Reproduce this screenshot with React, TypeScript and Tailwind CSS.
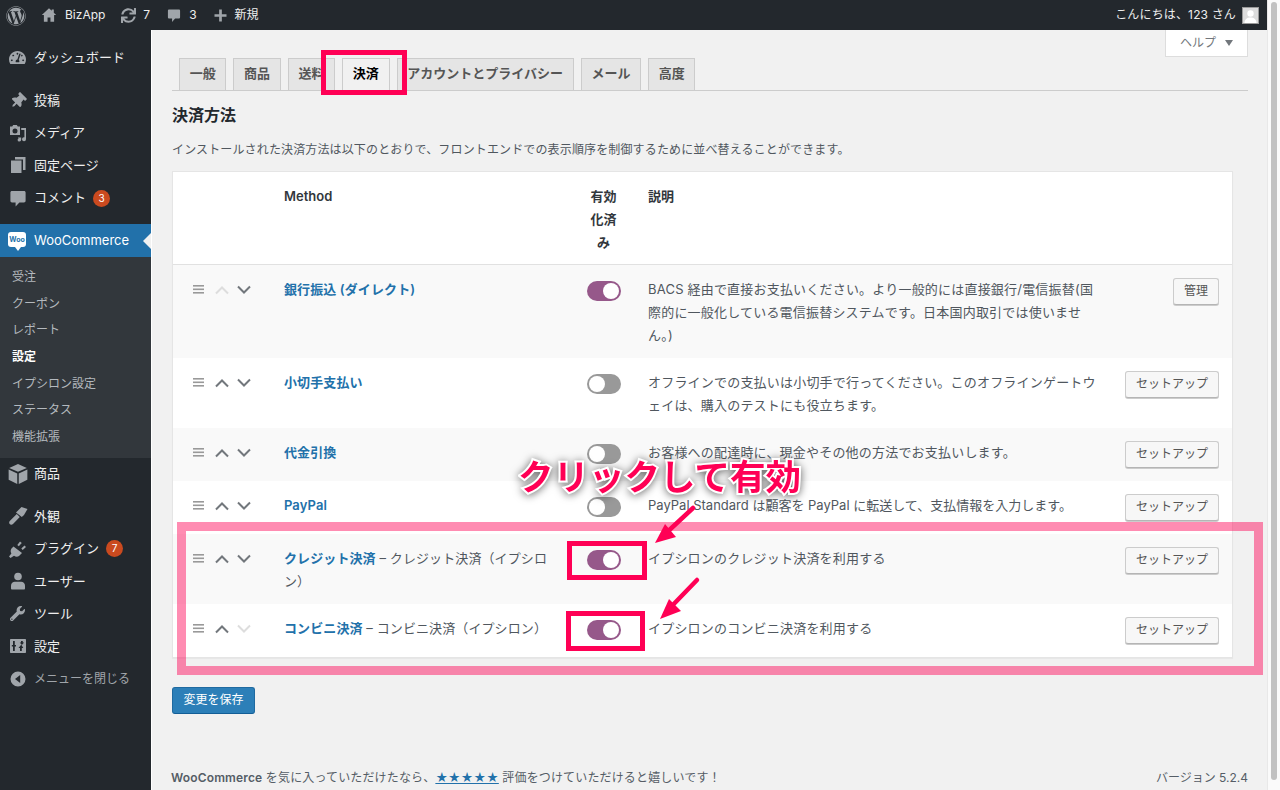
import React from 'react';
import { FaWordpress, FaSync, FaTachometerAlt, FaThumbtack, FaWrench } from 'react-icons/fa';

const font = { fontFamily: 'Inter, "Noto Sans CJK JP", sans-serif' };

const Svg: React.FC<{ size?: number; children: React.ReactNode; className?: string }> = ({ size = 20, children, className }) => (
  <svg width={size} height={size} viewBox="0 0 20 20" fill="currentColor" className={className}>
    {children}
  </svg>
);

const HomeIcon = () => (
  <Svg size={16}>
    <path d="M10 1.500 1 10h2.600v8.500h4.600v-5.500h3.600v5.500h4.600V10H19l-3-2.900V3h-2.600v1.600z" />
  </Svg>
);
const BubbleIcon = ({ size = 20 }: { size?: number }) => (
  <Svg size={size}>
    <path d="M4 3h12c1 0 1.600.7 1.600 1.600v8.200c0 1-.7 1.600-1.600 1.600h-4.600L7.600 18.600v-4.200H4c-1 0-1.600-.7-1.600-1.600V4.600c0-.9.600-1.600 1.600-1.600z" />
  </Svg>
);
const MediaIcon = () => (
  <Svg>
    <path fillRule="evenodd" d="M2 3.500h2.200l1-1.500h3.600l1 1.500H12v8.500H2zM7 5.500a2.500 2.500 0 1 0 0 5 2.500 2.500 0 0 0 0-5z" />
    <path d="M13.200 5H18v11.200a2 2 0 1 1-1.600-2V7h-3.200zM10 14.500h3.200v2.300a1.800 1.800 0 1 1-1.600-1.800h-1.600z" />
  </Svg>
);
const PagesIcon = () => (
  <Svg>
    <path d="M7 2h10.500v13H15V4.500H7z" />
    <path d="M3 5.500h10.500V18H3z" />
  </Svg>
);
const BoxIcon = () => (
  <Svg size={22}>
    <path d="M10 1 18 4.500 10 8 2 4.500z" />
    <path d="M1.500 6 9.300 9.500V19L1.500 15.200z" />
    <path d="M18.500 6 10.700 9.500V19l7.800-3.800z" />
  </Svg>
);
const BrushIcon = () => (
  <Svg>
    <path d="M10 4.500 13.500 1l6 2-3.500 6-2.200 2-5.800-4.500z" />
    <path d="M8.800 8 11.800 11 5 18c-1 1-2.500 1-3.300 0s-.7-2.200.300-3.200z" />
  </Svg>
);
const PlugIcon = () => (
  <Svg>
    <path d="M12 2.500 13.800 4 10.800 7.300l-1.500-1.300zM16.500 6.500 18 8 14.700 11l-1.400-1.500z" />
    <path d="M5.500 7.500 14 14l-3 3c-1.500 1-3.500.8-5-.3L2.500 19 1 17.500l2.400-3c-1-1.500-1-3.500.1-5z" />
  </Svg>
);
const UserIcon = () => (
  <Svg>
    <circle cx="10" cy="5.500" r="3.800" />
    <path d="M3 17.500v-3c0-2.200 2-3.800 3.800-3.800h6.400c1.800 0 3.800 1.600 3.800 3.800v3c0 .5-.5 1-1 1H4c-.5 0-1-.5-1-1z" />
  </Svg>
);
const SlidersIcon = () => (
  <Svg>
    <path fillRule="evenodd" d="M3 3h14c.6 0 1 .4 1 1v12c0 .6-.4 1-1 1H3c-.6 0-1-.4-1-1V4c0-.6.4-1 1-1zM5 5v4H3.800v1.600H5V15h1.800v-4.400H8V9H6.800V5zM13 5v1.500h-1.300l2.200 2.500 2.200-2.500h-1.300V5zM13 9l-2.500 3h1.500v3h1.800v-3h1.500L13.500 9zM9 9.500" />
  </Svg>
);
const CollapseIcon = () => (
  <Svg>
    <path fillRule="evenodd" d="M10 2.500a7.500 7.500 0 1 1 0 15 7.500 7.500 0 0 1 0-15zM12.200 6 7 10l5.200 4z" />
  </Svg>
);

const mainMenu: { label: string; icon: React.ReactNode; cls: string; badge?: string }[] = [
  { label: 'ダッシュボード', icon: <FaTachometerAlt size={17} />, cls: 'h-[33px]' },
  { label: '投稿', icon: <FaThumbtack size={16} className="rotate-45" />, cls: 'h-[32px] mt-[10.5px]' },
  { label: 'メディア', icon: <MediaIcon />, cls: 'h-[32.5px]' },
  { label: '固定ページ', icon: <PagesIcon />, cls: 'h-[32.5px]' },
  { label: 'コメント', icon: <BubbleIcon />, cls: 'h-[33px]', badge: '3' },
];

const lowerMenu: { label: string; icon: React.ReactNode; cls: string; badge?: string }[] = [
  { label: '商品', icon: <BoxIcon />, cls: 'h-[32px]' },
  { label: '外観', icon: <BrushIcon />, cls: 'h-[32.5px] mt-[10px]' },
  { label: 'プラグイン', icon: <PlugIcon />, cls: 'h-[32.5px]', badge: '7' },
  { label: 'ユーザー', icon: <UserIcon />, cls: 'h-[32.5px]' },
  { label: 'ツール', icon: <FaWrench size={15} />, cls: 'h-[32.5px]' },
  { label: '設定', icon: <SlidersIcon />, cls: 'h-[32.5px]' },
];

const subMenu = ['受注', 'クーポン', 'レポート', '設定', 'イプシロン設定', 'ステータス', '機能拡張'];

const MenuItem: React.FC<{ label: string; icon: React.ReactNode; cls: string; badge?: string }> = ({ label, icon, cls, badge }) => (
  <div className={`flex items-center ${cls}`}>
    <span className="w-[34px] flex justify-center pl-px text-[#a0a5aa]">{icon}</span>
    <span className="text-[13px] text-[#eeeeee]">{label}</span>
    {badge && (
      <span className="ml-[7px] w-[17px] h-[17px] rounded-full bg-[#ca4a1f] text-white text-[10px] flex items-center justify-center">
        {badge}
      </span>
    )}
  </div>
);

const Sidebar = () => (
  <div className="w-[151px] shrink-0 bg-[#23282d] pt-[11px]">
    {mainMenu.map((m) => (
      <MenuItem key={m.label} {...m} />
    ))}
    <div className="relative mt-[9.5px] h-[33px] bg-[#2271aa] flex items-center">
      <span className="w-[34px] flex justify-center">
        <span className="relative w-[18px] h-[15px] -mt-[2px] bg-white rounded-[3px] flex items-center justify-center text-[7px] font-bold text-[#2271aa] leading-none">
          Woo
          <span className="absolute left-[7px] top-[15px] w-0 h-0 border-x-[3px] border-x-transparent border-t-[4px] border-t-white" />
        </span>
      </span>
      <span className="text-[13px] text-white">WooCommerce</span>
      <span className="absolute right-0 top-[9px] w-0 h-0 border-y-[8px] border-y-transparent border-r-[8px] border-r-[#f1f1f1]" />
    </div>
    <div className="bg-[#32373c] pt-[6.500px] h-[201px]">
      {subMenu.map((s) => (
        <div
          key={s}
          className={`h-[26.7px] pl-[12px] flex items-center text-[12px] ${s === '設定' ? 'font-bold text-white' : 'text-[#b4b9be]'}`}
        >
          {s}
        </div>
      ))}
    </div>
    {lowerMenu.map((m) => (
      <MenuItem key={m.label} {...m} />
    ))}
    <div className="flex items-center h-[32.5px]">
      <span className="w-[34px] flex justify-center pl-px text-[#a0a5aa]">
        <CollapseIcon />
      </span>
      <span className="text-[12px] text-[#a0a5aa]">メニューを閉じる</span>
    </div>
  </div>
);

const TopBar = () => (
  <div className="h-[30px] shrink-0 bg-[#23282d] flex items-center text-[12px] text-[#eeeeee]">
    <span className="w-[33px] pl-[6px] text-[#a0a5aa] mt-[1px]">
      <FaWordpress size={20} />
    </span>
    <span className="ml-[8px] text-[#a0a5aa]">
      <HomeIcon />
    </span>
    <span className="ml-[8px]">BizApp</span>
    <span className="ml-[16px] text-[#a0a5aa]">
      <FaSync size={15} />
    </span>
    <span className="ml-[7px]">7</span>
    <span className="ml-[16px] text-[#a0a5aa]">
      <BubbleIcon size={16} />
    </span>
    <span className="ml-[7px]">3</span>
    <span className="ml-[16px] text-[#a0a5aa]">
      <Svg size={15}>
        <path d="M8.200 2h3.600v6.200H18v3.600h-6.200V18H8.200v-6.200H2V8.200h6.200z" />
      </Svg>
    </span>
    <span className="ml-[7px]">新規</span>
    <div className="ml-auto flex items-center pr-[8px]">
      <span className="tracking-[0.15px]">こんにちは、123 さん</span>
      <span className="ml-[6px] w-[17px] h-[17px] bg-[#dcdcdc] border border-[#999] overflow-hidden flex items-end justify-center">
        <svg width="15" height="15" viewBox="0 0 15 15" fill="#fff">
          <circle cx="7.500" cy="5.500" r="3.200" />
          <path d="M1.500 15c0-3.500 2.500-5.500 6-5.500s6 2 6 5.500z" />
        </svg>
      </span>
    </div>
  </div>
);

const tabs = ['一般', '商品', '送料', '決済', 'アカウントとプライバシー', 'メール', '高度'];

const Chevron: React.FC<{ up?: boolean; off?: boolean }> = ({ up, off }) => (
  <svg width="16" height="10" viewBox="0 0 16 10" fill="none" stroke={off ? '#dddddd' : '#72777c'} strokeWidth="2">
    <path d={up ? 'M2 8.500 8 2.500l6 6' : 'M2 1.500l6 6 6-6'} />
  </svg>
);

const Toggle: React.FC<{ on?: boolean }> = ({ on }) => (
  <span
    className={`mx-auto w-[34px] h-[20px] rounded-full p-[2px] flex ${on ? 'bg-[#96588a] justify-end' : 'bg-[#999999] justify-start'}`}
  >
    <span className="block w-[16px] h-[16px] rounded-full bg-white" />
  </span>
);

type Row = {
  cls: string;
  name: string;
  sub?: string;
  on?: boolean;
  desc: string;
  descCls?: string;
  action: string;
  upOff?: boolean;
  downOff?: boolean;
};

const rows: Row[] = [
  {
    cls: 'h-[93px] bg-[#f9f9f9]',
    name: '銀行振込 (ダイレクト)',
    on: true,
    desc: 'BACS 経由で直接お支払いください。より一般的には直接銀行/電信振替(国際的に一般化している電信振替システムです。日本国内取引では使いません。)',
    action: '管理',
    upOff: true,
  },
  {
    cls: 'h-[70px] bg-white',
    name: '小切手支払い',
    desc: 'オフラインでの支払いは小切手で行ってください。このオフラインゲートウェイは、購入のテストにも役立ちます。',
    action: 'セットアップ',
  },
  {
    cls: 'h-[53px] bg-[#f9f9f9]',
    name: '代金引換',
    desc: 'お客様への配達時に、現金やその他の方法でお支払いします。',
    action: 'セットアップ',
  },
  {
    cls: 'h-[53px] bg-white',
    name: 'PayPal',
    desc: 'PayPal Standard は顧客を PayPal に転送して、支払情報を入力します。',
    descCls: 'tracking-normal',
    action: 'セットアップ',
  },
  {
    cls: 'h-[70px] bg-[#f9f9f9]',
    name: 'クレジット決済',
    sub: ' – クレジット決済（イプシロン）',
    on: true,
    desc: 'イプシロンのクレジット決済を利用する',
    action: 'セットアップ',
  },
  {
    cls: 'h-[53px] bg-white',
    name: 'コンビニ決済',
    sub: ' – コンビニ決済（イプシロン）',
    on: true,
    desc: 'イプシロンのコンビニ決済を利用する',
    action: 'セットアップ',
    downOff: true,
  },
];

const gridCols = 'grid grid-cols-[111px_275px_89px_452px_1fr]';

const PaymentRow: React.FC<{ row: Row }> = ({ row }) => (
  <div className={`${gridCols} ${row.cls} text-[13px] leading-[23px] text-[#50575e]`}>
    <div className="flex items-center h-[23px] mt-[13px] pl-[20px]">
      <svg width="11" height="9" viewBox="0 0 11 9" fill="#999999">
        <rect width="11" height="1.600" />
        <rect y="3.500" width="11" height="1.600" />
        <rect y="7" width="11" height="1.600" />
      </svg>
      <span className="ml-[10px]">
        <Chevron up off={row.upOff} />
      </span>
      <span className="ml-[6px]">
        <Chevron off={row.downOff} />
      </span>
    </div>
    <div className="pt-[13px] tracking-[0.1px]">
      <span className="font-semibold text-[#2271aa]">{row.name}</span>
      {row.sub}
    </div>
    <div className="pt-[15.500px]">
      <Toggle on={row.on} />
    </div>
    <div className={`pt-[13px] ${row.descCls ?? 'tracking-[0.2px]'}`}>{row.desc}</div>
    <div className="pt-[12.5px] pr-[13px] flex justify-end items-start">
      <button className="h-[27px] px-[10px] rounded-[3px] border border-[#cccccc] border-b-[#b5b5b5] bg-[#f7f7f7] text-[12px] leading-none text-[#555555] shadow-[0_1px_0_#cccccc]">
        {row.action}
      </button>
    </div>
  </div>
);

const Annotations = () => (
  <>
    <div className="absolute left-[321px] top-[50px] w-[86px] h-[45px] border-[5px] border-[#ff0055]" />
    <div className="absolute left-[177px] top-[522px] w-[1086px] h-[153px] border-[9.5px] border-[#ff0055]/45" />
    <div className="absolute left-[567px] top-[541px] w-[80px] h-[39px] border-[5px] border-[#ff0055]" />
    <div className="absolute left-[566px] top-[611px] w-[79px] h-[40px] border-[5px] border-[#ff0055]" />
    <svg className="absolute left-0 top-0 pointer-events-none" width="1280" height="790" fill="none">
      <path d="M693 508 664 535" stroke="#ff0055" strokeWidth="4.500" strokeLinecap="round" />
      <path d="M655 543 665 524 676 537z" fill="#ff0055" />
      <path d="M697 580 668 610" stroke="#ff0055" strokeWidth="4.500" strokeLinecap="round" />
      <path d="M660 619 669 599 681 611z" fill="#ff0055" />
    </svg>
    <div className="absolute left-[518px] top-[457px] text-[35.500px] leading-[42px] font-bold text-[#ff0055] whitespace-nowrap [-webkit-text-stroke:4px_white] [paint-order:stroke_fill] [filter:drop-shadow(0_1px_4px_rgba(0,0,0,0.6))]">
      クリックして有効
    </div>
  </>
);

export default function App() {
  return (
    <div className="relative w-[1280px] h-[790px] overflow-hidden flex bg-[#f1f1f1]" style={font}>
      <div className="flex-1 min-w-0 flex flex-col">
        <TopBar />
        <div className="flex-1 flex min-h-0">
          <Sidebar />
          <div className="flex-1 min-w-0 border-l border-white pl-[20px] pr-[19px] flex flex-col text-[#50575e]">
            <div className="flex justify-end h-[27px]">
              <div className="w-[83px] h-[27px] bg-white border border-t-0 border-[#dddddd] flex items-center justify-center gap-[9px] text-[12px] text-[#72777c]">
                ヘルプ
                <span className="w-0 h-0 border-x-[4px] border-x-transparent border-t-[6px] border-t-[#72777c]" />
              </div>
            </div>
            <div className="mt-px h-[33px] pl-[7px] flex gap-[7px] border-b border-[#cccccc]">
              {tabs.map((t) => (
                <div
                  key={t}
                  className={`h-[33px] px-[9.700px] pb-[2px] border border-[#cccccc] flex items-center text-[13px] font-semibold ${
                    t === '決済' ? 'bg-[#f1f1f1] text-black border-b-[#f1f1f1]' : 'bg-[#e5e5e5] text-[#555555]'
                  }`}
                >
                  {t}
                </div>
              ))}
            </div>
            <h2 className="mt-[13px] text-[16px] leading-[22px] font-semibold text-[#23282d]">決済方法</h2>
            <p className="mt-[15px] text-[12px] leading-[18px] tracking-[0.14px]">
              インストールされた決済方法は以下のとおりで、フロントエンドでの表示順序を制御するために並べ替えることができます。
            </p>
            <div className="mt-[12px] w-[1061px] border border-[#e5e5e5] shadow-[0_1px_1px_rgba(0,0,0,0.04)] bg-white">
              <div className={`${gridCols} h-[93px] border-b border-[#e1e1e1] text-[13px] leading-[23px] font-semibold text-[#32373c]`}>
                <div />
                <div className="pt-[13px]">Method</div>
                <div className="pt-[13px] flex justify-center">
                  <div className="w-[28px] text-center">有効化済み</div>
                </div>
                <div className="pt-[13px]">説明</div>
                <div />
              </div>
              {rows.map((r) => (
                <PaymentRow key={r.name} row={r} />
              ))}
            </div>
            <div className="mt-[28px]">
              <button className="w-[83px] h-[27px] rounded-[3px] bg-[#2c7fb8] border border-[#1f6aa0] border-b-[#135e96] text-white text-[12px] leading-none">
                変更を保存
              </button>
            </div>
            <div className="mt-auto h-[21px] -ml-[1px] flex justify-between text-[12px] leading-[18px] text-[#555d66]">
              <span className="tracking-[0.15px]">
                <b className="font-semibold">WooCommerce</b> を気に入っていただけたなら、
                <span className="text-[#2271aa] underline">★★★★★</span> 評価をつけていただけると嬉しいです！
              </span>
              <span>バージョン 5.2.4</span>
            </div>
          </div>
        </div>
      </div>
      <div className="w-[13px] shrink-0 bg-[#fafafa] border-l border-[#e8e8e8] pt-[2px] pb-[10px] pl-[2.500px] pr-[3px]">
        <div className="h-full rounded-full bg-[#c1c1c1]" />
      </div>
      <Annotations />
    </div>
  );
}
